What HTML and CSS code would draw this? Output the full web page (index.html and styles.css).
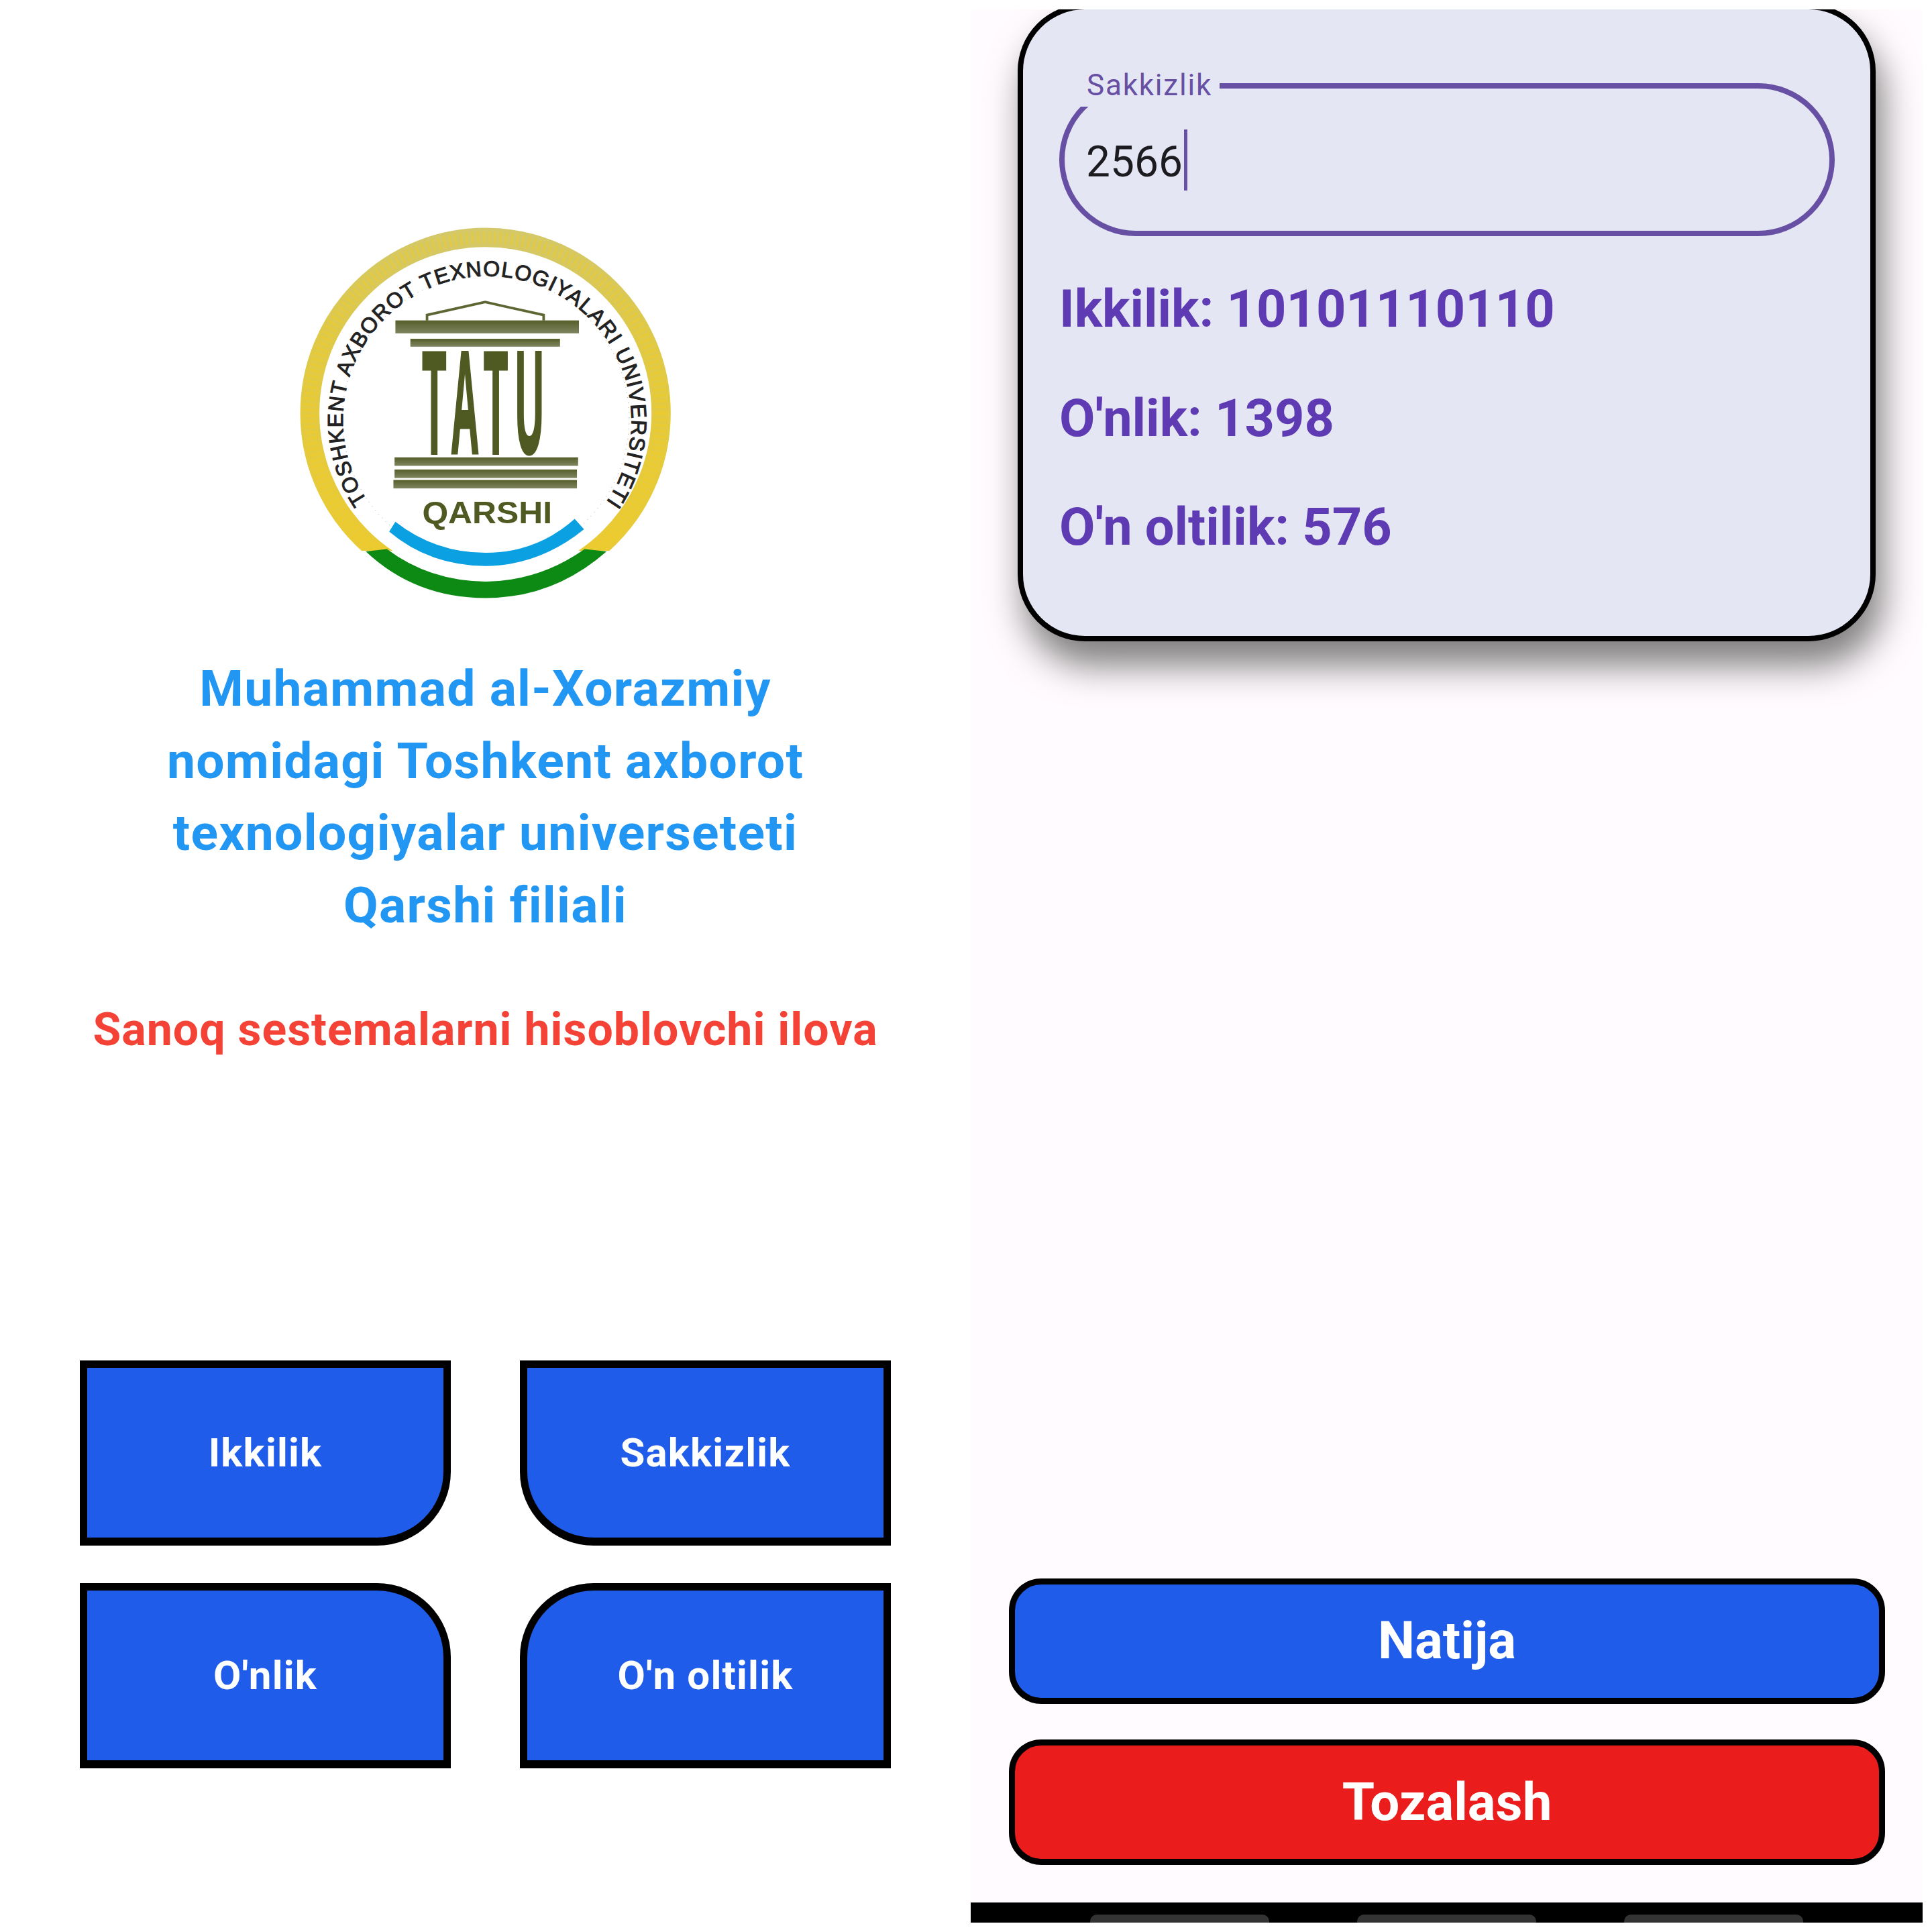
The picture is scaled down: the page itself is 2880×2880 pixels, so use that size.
FILE: index.html
```html
<!DOCTYPE html>
<html lang="uz">
<head>
<meta charset="utf-8">
<title>Sanoq sestemalari</title>
<link rel="stylesheet" href="styles.css">
</head>
<body>
<div class="screen">
  <main class="home">
    <svg class="logo" viewBox="0 0 1568 1568" xmlns="http://www.w3.org/2000/svg" aria-label="TATU Qarshi logo">
      <defs>
        <linearGradient id="bar" x1="0" y1="0" x2="0" y2="1">
          <stop offset="0" stop-color="#565e2a"/>
          <stop offset="1" stop-color="#7f8460"/>
        </linearGradient>
        <linearGradient id="gold" x1="0" y1="0" x2="0" y2="1">
          <stop offset="0" stop-color="#d4c868"/>
          <stop offset=".3" stop-color="#dfc948"/>
          <stop offset="1" stop-color="#eccb30"/>
        </linearGradient>
        <clipPath id="ringClip"><rect x="0" y="0" width="1568" height="1238"/></clipPath>
        <path id="ringText" d="M351 1061 A511 511 0 1 1 1189 1076"/>
      </defs>
      <g clip-path="url(#ringClip)">
        <circle class="ring" cx="769" cy="750" r="622"/>
        <circle class="ring-grain" cx="769" cy="750" r="622"/>
      </g>
      <circle class="dots" cx="770" cy="770" r="508"/>
      <path class="green" d="M345 1240 L420 1232 Q570 1345 770 1347 Q960 1345 1120 1232 L1198 1240 Q1010 1405 770 1405 Q520 1405 345 1240 Z"/>
      <path class="blue" d="M450 1135 L428 1170 Q570 1290 770 1292 Q960 1290 1118 1162 L1085 1125 Q950 1245 770 1245 Q590 1245 450 1135 Z"/>
      <path class="roof" d="M562 422 V403 L768 357 L975 403 V422"/>
      <rect class="bar" x="450" y="422" width="650" height="46"/>
      <rect class="bar" x="503" y="487" width="530" height="28"/>
      <rect class="bar" x="447" y="907" width="650" height="30"/>
      <rect class="bar" x="447" y="950" width="646" height="30"/>
      <rect class="bar" x="443" y="987" width="650" height="30"/>
      <text class="tatu" transform="translate(545 891) scale(.27 1)">TATU</text>
      <text class="qarshi" x="545" y="1140" textLength="460" lengthAdjust="spacingAndGlyphs">QARSHI</text>
      <text class="ring-label"><textPath href="#ringText" textLength="2215" lengthAdjust="spacing">TOSHKENT AXBOROT TEXNOLOGIYALARI UNIVERSITETI</textPath></text>
    </svg>
    <h1 class="title">Muhammad al-Xorazmiy<br>nomidagi Toshkent axborot<br>texnologiyalar universeteti<br>Qarshi filiali</h1>
    <p class="subtitle">Sanoq sestemalarni hisoblovchi ilova</p>
    <div class="menu">
      <button class="tile tile-br">Ikkilik</button>
      <button class="tile tile-bl">Sakkizlik</button>
      <button class="tile tile-tr">O'nlik</button>
      <button class="tile tile-tl">O'n oltilik</button>
    </div>
  </main>
  <section class="calc">
    <div class="card">
      <div class="field">
        <span class="field-label">Sakkizlik</span>
        <span class="field-value">2566</span><span class="caret"></span>
      </div>
      <p class="result result-first">Ikkilik: 10101110110</p>
      <p class="result">O'nlik: 1398</p>
      <p class="result">O'n oltilik: 576</p>
    </div>
    <div class="actions">
      <button class="action action-blue">Natija</button>
      <button class="action action-red">Tozalash</button>
    </div>
    <div class="navbar">
      <span class="pill"></span>
      <span class="pill"></span>
      <span class="pill"></span>
    </div>
  </section>
</div>
</body>
</html>
```
FILE: styles.css
```css
* { box-sizing: border-box; }
html, body { margin: 0; background: #fff; }
body { font-family: Roboto, "Noto Sans", sans-serif; font-variant-ligatures: none; }

.screen { display: flex; width: 2880px; height: 2880px; }

.home {
  width: 1447px;
  height: 2880px;
  padding: 300px 0 244px;
  display: flex;
  flex-direction: column;
  background: #fff;
}
.logo { width: 660px; height: 660px; margin-left: 400px; flex: none; display: block; }
.ring { fill: none; stroke: url(#gold); stroke-width: 68; }
.ring-grain { fill: none; stroke: #f2cc1e; stroke-opacity: .45; stroke-width: 44; stroke-dasharray: 8 12; }
.dots { fill: none; stroke: #777; stroke-width: 2; stroke-dasharray: 2 16; }
.green { fill: #0c8a14; }
.blue { fill: #0aa0e2; }
.roof { fill: none; stroke: #5f6634; stroke-width: 9; }
.bar { fill: url(#bar); }
.tatu {
  font-family: "Liberation Sans", sans-serif;
  font-weight: 700;
  font-size: 514px;
  letter-spacing: 100px;
  fill: #4f5a22;
  stroke: #4f5a22;
  stroke-width: 3.5px;
  vector-effect: non-scaling-stroke;
}
.qarshi { font-family: "Liberation Sans", sans-serif; font-weight: 700; font-size: 110px; fill: #4f5a22; }
.ring-label { font-family: "Liberation Sans", sans-serif; font-size: 76px; fill: #222; stroke: #222; stroke-width: 2.5; }

.title {
  margin: 13px 0 0;
  font-size: 75px;
  line-height: 107.6px;
  font-weight: 700;
  letter-spacing: 1.3px;
  text-align: center;
  color: #2196f3;
}
.subtitle {
  margin: 92px 0 0;
  font-size: 68px;
  line-height: 80px;
  font-weight: 700;
  letter-spacing: 1px;
  text-align: center;
  color: #f44336;
}

.menu {
  margin-top: auto;
  display: grid;
  grid-template-columns: 553px 553px;
  grid-auto-rows: 276px;
  column-gap: 103px;
  row-gap: 56px;
  justify-content: center;
}
.tile {
  border: 11px solid #000;
  border-bottom-width: 12px;
  background: #1f5ce9;
  color: #fff;
  font: 700 60px Roboto, sans-serif;
  letter-spacing: 1.2px;
  padding: 0;
}
.tile-br { border-bottom-right-radius: 110px; }
.tile-bl { border-bottom-left-radius: 110px; }
.tile-tr { border-top-right-radius: 110px; }
.tile-tl { border-top-left-radius: 110px; }

.calc {
  width: 1419px;
  height: 2852px;
  margin-top: 14px;
  display: flex;
  flex-direction: column;
  overflow: hidden;
  background: #fffbfe;
}
.card {
  width: 1279px;
  height: 950px;
  margin: -8px 0 0 70px;
  padding: 110px 53px 0 54px;
  flex: none;
  border: 8px solid #000;
  border-radius: 100px;
  background: #e4e6f3;
  box-shadow: 10px 36px 54px rgba(0, 0, 0, .5);
}
.field {
  position: relative;
  height: 228px;
  padding-left: 32px;
  display: flex;
  align-items: center;
  border: 8px solid #6750a4;
  border-radius: 114px;
}
.field-label {
  position: absolute;
  left: 23px;
  top: -33px;
  height: 60px;
  padding: 0 11px 0 10px;
  background: #e4e6f3;
  font-size: 44px;
  letter-spacing: 1.8px;
  line-height: 56px;
  color: #6750a4;
}
.field-value { font-size: 64px; color: #1c1b1f; position: relative; top: 3px; }
.caret { width: 5px; height: 91px; margin-left: 2px; background: #6750a4; }
.result {
  margin: 0;
  font-size: 77.5px;
  line-height: 162.5px;
  font-weight: 700;
  color: #5e3ab3;
}
.result-first { margin-top: 28px; }

.actions {
  margin-top: auto;
  margin-left: 57px;
  width: 1306px;
  display: flex;
  flex-direction: column;
  gap: 53px;
}
.action {
  height: 187px;
  border: 9px solid #000;
  border-radius: 48px;
  color: #fff;
  font: 700 78px Roboto, sans-serif;
  padding: 0;
}
.action-blue { background: #1f5ce9; padding-bottom: 2px; }
.action-red { background: #eb1c1c; }

.navbar {
  margin-top: 56px;
  height: 30px;
  flex: none;
  display: flex;
  justify-content: center;
  align-items: flex-end;
  gap: 131px;
  background: #000;
}
.pill { width: 267px; height: 12px; border-radius: 10px 10px 0 0; background: #333; }
```
